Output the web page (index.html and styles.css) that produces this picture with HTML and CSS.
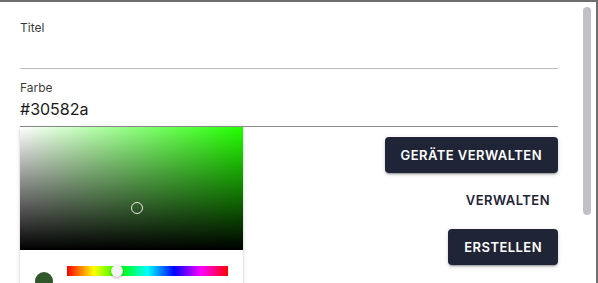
FILE: index.html
```html
<!DOCTYPE html>
<html>
  <head>
    <title>Kategorie bearbeiten</title>
    <link rel="stylesheet" href="styles.css">
  </head>
  <body>
    <div class="window">
      <div class="dialog">
        <!-- Eingabefelder -->
        <div class="field field-title">
          <label class="field-label">Titel</label>
          <div class="field-value"></div>
        </div>
        <div class="field field-color">
          <label class="field-label">Farbe</label>
          <div class="field-value">#30582a</div>
        </div>
        <div class="row">
          <!-- Farbwaehler -->
          <div class="picker">
            <div class="canvas">
              <span class="canvas-dot" style="left: 52.5%; top: 65.5%"></span>
            </div>
            <div class="controls">
              <div class="swatch"></div>
              <div class="sliders">
                <div class="slider hue"><span class="thumb" style="left: 31.1%"></span></div>
                <div class="slider alpha"><span class="thumb" style="left: 100%"></span></div>
              </div>
            </div>
          </div>
          <!-- Aktionen -->
          <div class="actions">
            <button class="btn btn-filled btn-first">Geräte verwalten</button>
            <button class="btn btn-text">Verwalten</button>
            <button class="btn btn-filled btn-last">Erstellen</button>
          </div>
        </div>
      </div>
      <div class="scrollbar"><div class="scroll-thumb"></div></div>
    </div>
  </body>
</html>
```

FILE: styles.css
```css
body {
  margin: 0;
  font-family: Inter, "Liberation Sans", sans-serif;
  background-color: #ffffff;
}

.window {
  display: flex;
  height: 283px;
  box-sizing: border-box;
  border-top: 2px solid #6e6e6e;
  border-right: 2px solid #6e6e6e;
  overflow: hidden;
}

.dialog {
  flex: 1;
  padding: 18px 0 0 20px;
}

/* Textfelder */
.field-label {
  display: block;
  font-size: 12px;
  line-height: 16px;
  color: rgba(0, 0, 0, 0.8);
}

.field-title {
  border-bottom: 1px solid #bdbdbd;
}

.field-title .field-value {
  height: 32px;
}

.field-color {
  margin-top: 11px;
  padding-bottom: 5px;
  border-bottom: 1px solid #8c8c8c;
}

.field-color .field-value {
  margin-top: 1px;
  font-size: 16px;
  line-height: 24px;
  color: #1a1a1a;
}

.row {
  display: flex;
  justify-content: space-between;
  align-items: flex-start;
}

/* Farbwaehler */
.picker {
  width: 223px;
  background-color: #ffffff;
  box-shadow: 0 3px 1px -2px rgba(0, 0, 0, 0.2), 0 2px 2px 0 rgba(0, 0, 0, 0.14), 0 1px 5px 0 rgba(0, 0, 0, 0.12);
}

.canvas {
  position: relative;
  height: 123px;
  background: linear-gradient(to top, #000000, rgba(0, 0, 0, 0)),
    linear-gradient(to right, #ffffff, hsl(112, 100%, 50%));
}

.canvas-dot {
  position: absolute;
  width: 10px;
  height: 10px;
  border: 1.5px solid #e8e8e8;
  border-radius: 50%;
  transform: translate(-50%, -50%);
}

.controls {
  display: flex;
  align-items: center;
  padding: 16px 15px;
}

.swatch {
  flex: none;
  width: 18px;
  height: 18px;
  margin-right: 14px;
  border-radius: 50%;
  background-color: #30582a;
}

.sliders {
  flex: 1;
  display: flex;
  flex-direction: column;
  gap: 9px;
}

.slider {
  position: relative;
  height: 10px;
}

.hue {
  background: linear-gradient(to right, #ff0000, #ffff00, #00ff00, #00ffff, #0000ff, #ff00ff, #ff0000);
}

.alpha {
  background: linear-gradient(to right, rgba(48, 88, 42, 0), #30582a);
}

.thumb {
  position: absolute;
  top: 50%;
  width: 12px;
  height: 12px;
  border-radius: 50%;
  background-color: #f5f5f5;
  box-shadow: 0 1px 3px rgba(0, 0, 0, 0.3);
  transform: translate(-50%, -50%);
}

/* Knoepfe */
.actions {
  display: flex;
  flex-direction: column;
  align-items: flex-end;
}

.btn {
  height: 36px;
  padding: 0 16px;
  border: none;
  border-radius: 4px;
  font-family: Inter, "Liberation Sans", sans-serif;
  font-size: 13px;
  font-weight: 600;
  letter-spacing: 0.45px;
  text-transform: uppercase;
  cursor: pointer;
}

.btn-filled {
  background-color: #1f2437;
  color: #ffffff;
  box-shadow: 0 3px 1px -2px rgba(0, 0, 0, 0.2), 0 2px 2px 0 rgba(0, 0, 0, 0.14), 0 1px 5px 0 rgba(0, 0, 0, 0.12);
}

.btn-first {
  margin-top: 10px;
}

.btn-text {
  margin-top: 9px;
  padding: 0 8px;
  background-color: transparent;
  color: #1f2437;
}

.btn-last {
  margin-top: 11px;
}

/* Bildlaufleiste */
.scrollbar {
  flex: none;
  width: 38px;
  box-sizing: border-box;
  padding: 5px 5px 0 25px;
}

.scroll-thumb {
  width: 8px;
  height: 208px;
  border-radius: 4px;
  background-color: #c1c0c8;
}
```
